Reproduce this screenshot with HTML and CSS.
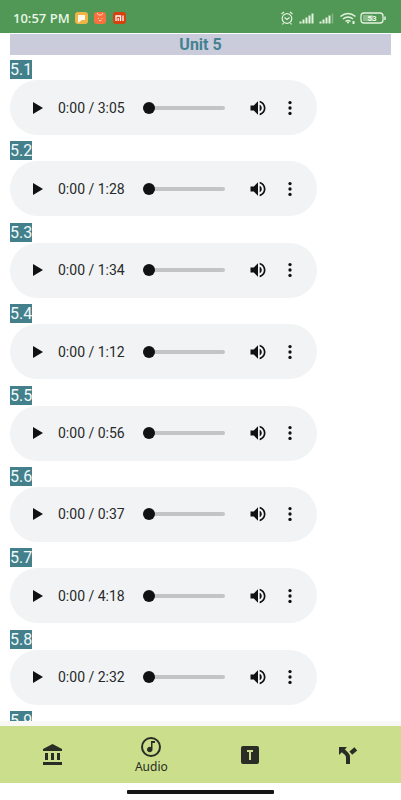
FILE: index.html
```
<!DOCTYPE html>
<html lang="en">
<head>
<meta charset="utf-8">
<meta name="viewport" content="width=device-width, initial-scale=1">
<title>Unit 5</title>
<link rel="stylesheet" href="styles.css">
</head>
<body>
<svg width="0" height="0" class="sprites" aria-hidden="true">
  <symbol id="play" viewBox="0 0 18 18"><path d="M4 3v12l10-6z"/></symbol>
  <symbol id="volume" viewBox="0 0 24 24"><path d="M3 9v6h4l5 5V4L7 9H3zm13.500 3c0-1.770-1.020-3.290-2.500-4.030v8.050c1.480-.730 2.500-2.250 2.500-4.020zM14 3.230v2.060c2.890.860 5 3.540 5 6.710s-2.110 5.850-5 6.710v2.060c4.010-.910 7-4.490 7-8.770s-2.990-7.860-7-8.770z"/></symbol>
  <symbol id="more" viewBox="0 0 24 24"><circle cx="12" cy="5.500" r="2"/><circle cx="12" cy="12" r="2"/><circle cx="12" cy="18.500" r="2"/></symbol>
</svg>
<div class="app">
  <header class="status">
    <span class="clock">10:57 PM</span>
    <svg class="badges" viewBox="0 0 51 14" aria-hidden="true">
      <rect x="0" y="1" width="13" height="12" rx="3" fill="#f0b445"/><path d="M3 4h7v5H7l-4 3z" fill="#fff8e8"/>
      <rect x="19" y="1" width="12" height="12" rx="3" fill="#f8703e"/><path d="M22 2l1.500 2h3L28 2M23 7.500h1M26.500 7.500h1M24 9.500h2.500" stroke="#ffd2bd" fill="none"/>
      <rect x="38" y="1" width="13" height="12" rx="3" fill="#d7400f"/><path d="M41 10V5h4.500v5M43.200 7v3M48 4.500V10" stroke="#fff" stroke-width="1.300" fill="none"/>
    </svg>
    <svg class="signals" viewBox="0 0 106 16" aria-hidden="true" fill="none" stroke="#e3f2df">
      <circle cx="6" cy="8.500" r="4.800" stroke-width="1.200"/><path d="M3.500 7.500l2.500 2 2.500-2M.5 4l2.500-2M9 2l2.500 2M2.500 13l-1 1.500M9.500 13l1 1.500" stroke-width="1.200"/>
      <path d="M19.500 13.500v-2M22.500 13.500v-4M25.500 13.500v-6M28.500 13.500v-8M31.500 13.500v-10" stroke-width="2"/>
      <path d="M39.500 13.500v-2M42.500 13.500v-4M45.500 13.500v-6M48.500 13.500v-8" stroke-width="2"/><path d="M51.500 13.500v-10" stroke-width="1.500" stroke="#86b884"/>
      <path d="M59.500 6.500q7.500-6 15 0M62 9q5-4 10 0M64.500 11.500q2.500-2 5 0" stroke-width="1.600"/><circle cx="67" cy="12.500" r="1" fill="#e3f2df" stroke="none"/><path d="M72.500 11v3" stroke-width="2"/>
      <rect x="80" y="3" width="22" height="10" rx="3" stroke-width="1.300"/><path d="M82 5h10v6H82z" fill="#8dba89" stroke="none"/><path d="M104 6.500v3.500" stroke-width="1.500"/>
      <text x="91" y="11" text-anchor="middle" class="charge">53</text>
    </svg>
  </header>
  <main class="page">
    <h1 class="unit">Unit 5</h1>
    <div class="tracks" id="tracks"></div>
  </main>
  <nav class="tabs">
    <a href="#home" class="tab" aria-label="Home"><svg viewBox="0 0 24 24"><path d="M4 10v7h3v-7H4zm6 0v7h3v-7h-3zM2 22h19v-3H2v3zm14-12v7h3v-7h-3zm-4.500-9L2 6v2h19V6l-9.500-5z"/></svg></a>
    <a href="#audio" class="tab"><svg viewBox="0 0 24 24"><circle cx="12" cy="12" r="9" fill="none" stroke="currentColor" stroke-width="2"/><path d="M12 6h4v2h-2.500v6.500a2.750 2.750 0 1 1-1.500-2.450z"/></svg><span>Audio</span></a>
    <a href="#text" class="tab" aria-label="Text"><svg viewBox="0 0 24 24"><path fill-rule="evenodd" d="M5 3h14a2 2 0 0 1 2 2v14a2 2 0 0 1-2 2H5a2 2 0 0 1-2-2V5a2 2 0 0 1 2-2zm4 4v2h2v8h2V9h2V7z"/></svg></a>
    <a href="#more" class="tab" aria-label="More"><svg viewBox="0 0 24 24"><path d="M3 4h8L8.800 6.200l3.200 3.300q2 2 2 4.500v7h-4v-6.500q0-1.500-1-2.500L5.800 9.200 3 12z"/><path d="M14.800 10.200L19.800 5.800" fill="none" stroke="currentColor" stroke-width="4.200"/></svg></a>
  </nav>
  <footer class="gesture"><div class="handle"></div></footer>
</div>
<script src="tracks.js"></script>
</body>
</html>
```
FILE: styles.css
```
* { box-sizing: border-box; }
body { margin: 0; background: #fff; font-family: Roboto, "Liberation Sans", sans-serif; }
.sprites { position: absolute; }
.app { display: flex; flex-direction: column; height: 100vh; }
.status { display: flex; align-items: center; flex: none; height: 33px; padding: 2px 14px 0 13px; background: #519755; color: #e8f6e4; }
.clock { font: 600 13px "Open Sans", sans-serif; }
.badges { width: 51px; height: 14px; margin-left: 5px; }
.signals { width: 106px; height: 16px; margin-left: auto; }
.charge { font: 700 8px Roboto, sans-serif; fill: #f0faee; stroke: none; }
.page { display: flex; flex-direction: column; flex: 1; min-height: 0; padding: 1px 10px 0; overflow: hidden; }
.unit { flex: none; margin: 0 0 5px; background: #caccdc; color: #438290; font-size: 16px; line-height: 21px; text-align: center; }
.tracks { display: grid; flex: 1; grid-template-rows: repeat(8, minmax(81px, 1fr)) 10px; }
.track { min-height: 0; overflow: hidden; }
.number { display: block; width: fit-content; margin: 0; background: #43808c; color: #f0fafa; font-size: 16px; font-weight: 400; line-height: 19px; }
.player { display: flex; align-items: center; width: 307px; max-width: 100%; height: 55px; margin-top: 1px; padding: 0 11px 0 18px; border-radius: 28px; background: #f1f3f4; }
.player button { display: grid; flex: none; place-items: center; padding: 0; border: 0; background: none; color: #101113; }
.player svg { display: block; width: 20px; height: 20px; fill: currentColor; }
.player .play { width: 19px; height: 32px; }
.player .play svg { width: 18px; height: 18px; }
.time { width: 70px; margin-left: 11px; color: #28292b; font-size: 14px; white-space: nowrap; }
.seek { flex: 1; min-width: 0; height: 12px; margin: 0 0 0 15px; appearance: none; background: transparent; }
.seek::-webkit-slider-runnable-track { height: 4px; border-radius: 2px; background: #c3c4c5; }
.seek::-webkit-slider-thumb { width: 12px; height: 12px; margin-top: -4px; appearance: none; border-radius: 50%; background: #111214; }
.mute { width: 32px; height: 32px; margin-left: 17px; }
.menu { width: 32px; height: 32px; }
.tabs { display: grid; grid-template-columns: repeat(4, 1fr); flex: none; height: 62px; padding: 0 4px; border-top: 5px solid #f8f9f4; background: #cbde8b; }
.tab { display: flex; flex-direction: column; align-items: center; justify-content: center; color: #292d25; font: 12px/16px "Noto Sans", sans-serif; text-decoration: none; }
.tab svg { width: 24px; height: 24px; fill: currentColor; }
.gesture { flex: none; height: 17px; padding-top: 7px; }
.handle { width: 147px; height: 4px; margin: 0 auto; border-radius: 1px; background: #161616; }
```
FILE: tracks.js
```
const durations = ["3:05", "1:28", "1:34", "1:12", "0:56", "0:37", "4:18", "2:32", null];

document.getElementById("tracks").innerHTML = durations.map((length, i) => {
  const name = `5.${i + 1}`;
  const player = length ? `
    <div class="player" role="group" aria-label="Audio ${name}">
      <button class="play" aria-label="Play"><svg><use href="#play"/></svg></button>
      <span class="time">0:00 / ${length}</span>
      <input class="seek" type="range" min="0" max="100" value="0" aria-label="Position">
      <button class="mute" aria-label="Mute"><svg><use href="#volume"/></svg></button>
      <button class="menu" aria-label="More options"><svg><use href="#more"/></svg></button>
    </div>` : "";
  return `<section class="track"><h2 class="number">${name}</h2>${player}</section>`;
}).join("");
```
